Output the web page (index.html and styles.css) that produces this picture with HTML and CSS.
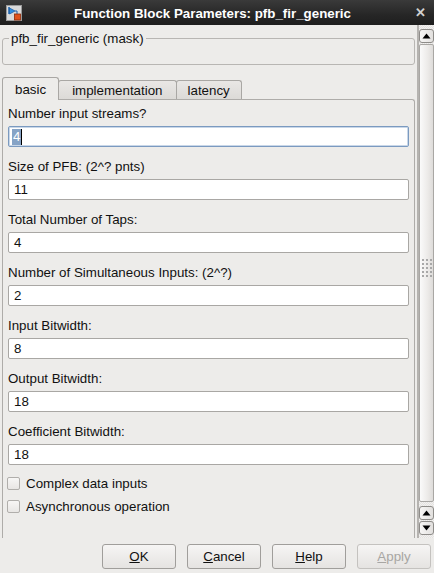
FILE: index.html
```html
<!DOCTYPE html>
<html>
<head>
<meta charset="utf-8">
<link rel="stylesheet" href="styles.css">
</head>
<body>
<div class="window">
  <div class="titlebar">
    <svg class="appicon" width="16" height="16" viewBox="0 0 16 16">
      <rect x="0.5" y="0.5" width="15" height="15" fill="#d9d9d9" stroke="#9a9a9a"/>
      <path d="M3 2 L3 9" stroke="#1c5fa8" stroke-width="1.5"/>
      <path d="M3.5 3 L9 6 L3.5 9 Z" fill="#2f8ee0" stroke="#1c5fa8" stroke-width="0.8"/>
      <path d="M9 6 L11 6 L11 9" stroke="#1c5fa8" stroke-width="1" fill="none"/>
      <rect x="8.5" y="9" width="6" height="6" fill="#e0521a" stroke="#8a2a08" stroke-width="0.8"/>
    </svg>
    <div class="title">Function Block Parameters: pfb_fir_generic</div>
    <div class="close">&#x2715;</div>
  </div>
  <div class="mainrow">
    <div class="content">
      <fieldset class="group">
        <legend>pfb_fir_generic (mask)</legend>
      </fieldset>
      <div class="tabs">
        <div class="tab active">basic</div>
        <div class="tab wide">implementation</div>
        <div class="tab">latency</div>
      </div>
      <div class="panel">
        <div class="field">
          <div class="label">Number input streams?</div>
          <div class="input focus"><span class="sel">4</span><span class="caret"></span></div>
        </div>
        <div class="field">
          <div class="label">Size of PFB: (2^? pnts)</div>
          <div class="input">11</div>
        </div>
        <div class="field">
          <div class="label">Total Number of Taps:</div>
          <div class="input">4</div>
        </div>
        <div class="field">
          <div class="label">Number of Simultaneous Inputs: (2^?)</div>
          <div class="input">2</div>
        </div>
        <div class="field">
          <div class="label">Input Bitwidth:</div>
          <div class="input">8</div>
        </div>
        <div class="field">
          <div class="label">Output Bitwidth:</div>
          <div class="input">18</div>
        </div>
        <div class="field">
          <div class="label">Coefficient Bitwidth:</div>
          <div class="input">18</div>
        </div>
        <div class="check first"><span class="box"></span>Complex data inputs</div>
        <div class="check"><span class="box"></span>Asynchronous operation</div>
      </div>
    </div>
    <div class="scrollbar">
      <div class="sbtn top"><svg width="9" height="6" viewBox="0 0 9 6"><path d="M0.5 5.5 L4.5 0.5 L8.5 5.5 Z" fill="#000"/></svg></div>
      <div class="thumb">
        <svg class="grip" width="10" height="19" viewBox="0 0 10 19">
          <g fill="#a8a8a8">
            <rect x="0" y="0" width="2" height="2"/><rect x="4" y="0" width="2" height="2"/><rect x="8" y="0" width="2" height="2"/>
            <rect x="0" y="4" width="2" height="2"/><rect x="4" y="4" width="2" height="2"/><rect x="8" y="4" width="2" height="2"/>
            <rect x="0" y="8" width="2" height="2"/><rect x="4" y="8" width="2" height="2"/><rect x="8" y="8" width="2" height="2"/>
            <rect x="0" y="12" width="2" height="2"/><rect x="4" y="12" width="2" height="2"/><rect x="8" y="12" width="2" height="2"/>
            <rect x="0" y="16" width="2" height="2"/><rect x="4" y="16" width="2" height="2"/><rect x="8" y="16" width="2" height="2"/>
          </g>
        </svg>
      </div>
      <div class="trough"></div>
      <div class="sbtn"><svg width="9" height="6" viewBox="0 0 9 6"><path d="M0.5 5.5 L4.5 0.5 L8.5 5.5 Z" fill="#000"/></svg></div>
      <div class="sbtn"><svg width="9" height="6" viewBox="0 0 9 6"><path d="M0.5 0.5 L4.5 5.5 L8.5 0.5 Z" fill="#000"/></svg></div>
    </div>
  </div>
  <div class="footer">
    <div class="btn"><u>O</u>K</div>
    <div class="btn"><u>C</u>ancel</div>
    <div class="btn"><u>H</u>elp</div>
    <div class="btn disabled"><u>A</u>pply</div>
  </div>
</div>
</body>
</html>
```
FILE: styles.css
```css
html, body {
  margin: 0;
  padding: 0;
}
body {
  width: 434px;
  height: 573px;
  overflow: hidden;
  background: #edecea;
  font-family: "Liberation Sans", Arial, sans-serif;
  font-size: 13.33px;
  color: #111;
}
.window {
  width: 434px;
  height: 573px;
  display: flex;
  flex-direction: column;
}
.titlebar {
  height: 25px;
  flex: none;
  background: linear-gradient(#3a3a3a, #262626 60%, #1e1e1e);
  display: flex;
  align-items: center;
  color: #fff;
}
.appicon {
  margin-left: 6px;
  flex: none;
}
.title {
  flex: 1;
  text-align: center;
  font-weight: bold;
  font-size: 13.33px;
  margin-left: -4px;
  padding-top: 1px;
}
.close {
  width: 26px;
  flex: none;
  color: #d0d0d0;
  font-weight: bold;
  font-size: 13px;
  text-align: center;
  margin-right: 1px;
}
.mainrow {
  flex: none;
  height: 513px;
  display: flex;
}
.content {
  flex: 1;
  display: flex;
  flex-direction: column;
  border-right: 2px solid #b5b3b0;
  padding-left: 2px;
  padding-right: 2px;
}
.group {
  margin: 6px 0 0 0;
  padding: 0;
  height: 34px;
  box-sizing: border-box;
  border: 1px solid #b8b6b3;
  border-radius: 3px;
  flex: none;
}
.group legend {
  padding: 0 2px;
  margin-left: 6px;
  line-height: 15px;
  color: #111;
}
.tabs {
  margin-top: 12px;
  display: flex;
  align-items: flex-end;
  height: 22px;
  position: relative;
  z-index: 1;
  flex: none;
}
.tab {
  height: 19px;
  box-sizing: border-box;
  border: 1px solid #a9a7a4;
  border-bottom: none;
  border-radius: 3px 3px 0 0;
  background: linear-gradient(#e9e7e5, #dcdad7);
  padding: 2px 11px 0 11px;
  line-height: 16px;
  margin-left: -1px;
}
.tab.wide {
  padding: 2px 13px 0 13px;
}
.tab:first-child {
  margin-left: 0;
}
.tab.active {
  height: 23px;
  background: #edecea;
  padding: 3px 12px 0 12px;
  line-height: 17px;
  margin-bottom: -1px;
  position: relative;
  z-index: 2;
}
.panel {
  flex: 1;
  border: 1px solid #aeaca9;
  border-bottom: none;
  border-radius: 0 3px 0 0;
  padding: 5px 5px 0 5px;
}
.field {
  margin-bottom: 11px;
}
.label {
  line-height: 17px;
  margin-bottom: 4px;
  white-space: nowrap;
}
.input {
  height: 21px;
  box-sizing: border-box;
  border: 1px solid #a9a7a4;
  border-radius: 2px;
  background: #fff;
  padding: 0 5px;
  line-height: 19px;
  display: flex;
  align-items: center;
}
.input.focus {
  border: 1px solid #7b9ac0;
  box-shadow: inset 0 0 0 1px #c9d7e8;
  padding-left: 3px;
}
.sel {
  background: #86a3c6;
  color: #fff;
  padding: 0 1px;
  line-height: 16px;
}
.caret {
  width: 1px;
  height: 16px;
  background: #000;
}
.check {
  display: flex;
  align-items: center;
  height: 23px;
}
.check.first {
  margin-top: -4px;
}
.check .box {
  width: 11px;
  height: 11px;
  border: 1px solid #b0aeab;
  border-radius: 2px;
  background: linear-gradient(#f7f6f5, #e8e6e4);
  margin: 0 6px 0 -1px;
}
.scrollbar {
  width: 15px;
  flex: none;
  display: flex;
  flex-direction: column;
  padding: 4px 0 2px 0;
  background: repeating-conic-gradient(#e4e2e0 0 25%, #f2f1f0 0 50%) 0 0 / 2px 2px;
}
.sbtn {
  height: 14px;
  box-sizing: border-box;
  border: 1px solid #8e8c89;
  border-radius: 3px;
  background: linear-gradient(90deg, #f7f6f5, #e2e0de);
  display: flex;
  align-items: center;
  justify-content: center;
  margin-bottom: 1px;
  flex: none;
}
.thumb {
  flex: 1;
  border: 1px solid #a9a7a4;
  border-radius: 2px;
  background: linear-gradient(90deg, #fafafa, #eceae8 60%, #dedcda);
  display: flex;
  align-items: center;
  justify-content: center;
}
.grip {
  margin-bottom: 10px;
}
.trough {
  height: 4px;
  flex: none;
}
.footer {
  flex: 1;
  display: flex;
  justify-content: flex-end;
  align-items: flex-start;
  padding: 6px 3px 0 0;
  gap: 11px;
}
.btn {
  width: 74px;
  height: 25px;
  box-sizing: border-box;
  border: 1px solid #a09e9b;
  border-radius: 3px;
  background: linear-gradient(#f6f5f4, #e5e3e1);
  text-align: center;
  line-height: 23px;
  color: #111;
}
.btn.disabled {
  color: #a8a6a3;
  border-color: #c4c2bf;
}
```
